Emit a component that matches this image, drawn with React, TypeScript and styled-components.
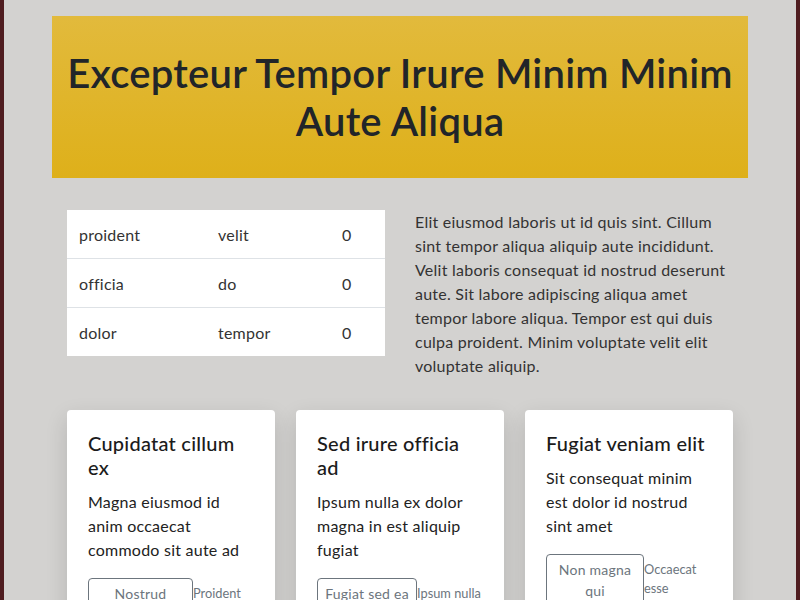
import React from 'react';
import styled, { createGlobalStyle } from 'styled-components';

const GlobalStyle = createGlobalStyle`
  html {
    background: #4f1d20;
  }
  body {
    margin: 0 auto;
    max-width: 792px;
    min-height: 100vh;
    background: #d3d2d0;
    font-family: Lato, 'Open Sans', sans-serif;
    letter-spacing: 0.015em;
    color: #212529;
  }
`;

//전체 페이지
const Page = styled.main`
  padding: 16px 48px 40px;
`;

//상단 배너
const Banner = styled.h1`
  margin: 0;
  padding: 33px 8px;
  background: linear-gradient(#e2ba3c, #deb01a);
  color: #212529;
  font-size: 40px;
  font-weight: 600;
  line-height: 1.2;
  text-align: center;
`;

const TwoCol = styled.section`
  display: grid;
  grid-template-columns: 1fr 1fr;
  gap: 30px;
  margin-top: 32px;
  padding: 0 15px;
  align-items: start;
`;

const Table = styled.table`
  width: 100%;
  background: #fff;
  border-collapse: collapse;
  font-size: 16px;
  color: #333;
`;

const Cell = styled.td<{ w?: number }>`
  width: ${(p) => (p.w ? `${p.w}px` : 'auto')};
  padding: 13px 12px 11px;
  line-height: 24px;
  border-top: 1px solid #dee2e6;
  tr:first-child & {
    border-top: none;
  }
`;

const Text = styled.p`
  margin: 0;
  font-size: 16px;
  line-height: 24px;
  color: #333;
`;

const Cards = styled.section`
  display: grid;
  grid-template-columns: repeat(3, 1fr);
  gap: 21px;
  margin-top: 32px;
  padding: 0 15px;
  align-items: start;
`;

const Card = styled.article`
  background: #fff;
  border-radius: 4px;
  box-shadow: 0 8px 22px rgba(0, 0, 0, 0.14);
  padding: 21px;
`;

const CardTitle = styled.h3`
  margin: 0 0 11px;
  font-size: 20px;
  font-weight: 500;
  line-height: 24px;
  color: #1b1b1b;
`;

const CardText = styled.p`
  margin: 0 0 16px;
  font-size: 16px;
  line-height: 24px;
  color: #222;
`;

const CardFoot = styled.div`
  display: flex;
  align-items: flex-start;
`;

const OutlineButton = styled.button<{ w: number }>`
  flex: 0 0 ${(p) => p.w}px;
  padding: 4px 3px;
  border: 1px solid #6c757d;
  border-radius: 4px;
  background: transparent;
  color: #6c757d;
  font-family: inherit;
  letter-spacing: inherit;
  font-size: 14px;
  line-height: 21px;
  text-align: center;
`;

const Muted = styled.small`
  flex: 1 1 0;
  min-width: 0;
  font-size: 12.8px;
  letter-spacing: 0;
  line-height: 19px;
  padding-top: 6px;
  color: #6c757d;
`;

const rows = [
  ['proident', 'velit', '0'],
  ['officia', 'do', '0'],
  ['dolor', 'tempor', '0'],
];

const cards = [
  {
    title: 'Cupidatat cillum ex',
    text: 'Magna eiusmod id anim occaecat commodo sit aute ad',
    button: 'Nostrud',
    width: 105,
    note: 'Proident',
  },
  {
    title: 'Sed irure officia ad',
    text: 'Ipsum nulla ex dolor magna in est aliquip fugiat',
    button: 'Fugiat sed ea',
    width: 100,
    note: 'Ipsum nulla',
  },
  {
    title: 'Fugiat veniam elit',
    text: 'Sit consequat minim est dolor id nostrud sint amet',
    button: 'Non magna qui',
    width: 98,
    note: 'Occaecat esse',
  },
];

const App = () => {
  return (
    <>
      <GlobalStyle />
      <Page>
        <Banner>Excepteur Tempor Irure Minim Minim Aute Aliqua</Banner>
        <TwoCol>
          <Table>
            <tbody>
              {rows.map((r) => (
                <tr key={r[0]}>
                  <Cell w={115}>{r[0]}</Cell>
                  <Cell w={100}>{r[1]}</Cell>
                  <Cell>{r[2]}</Cell>
                </tr>
              ))}
            </tbody>
          </Table>
          <Text>
            Elit eiusmod laboris ut id quis sint. Cillum sint tempor aliqua aliquip aute incididunt.
            Velit laboris consequat id nostrud deserunt aute. Sit labore adipiscing aliqua amet
            tempor labore aliqua. Tempor est qui duis culpa proident. Minim voluptate velit elit
            voluptate aliquip.
          </Text>
        </TwoCol>
        <Cards>
          {cards.map((c) => (
            <Card key={c.title}>
              <CardTitle>{c.title}</CardTitle>
              <CardText>{c.text}</CardText>
              <CardFoot>
                <OutlineButton w={c.width}>{c.button}</OutlineButton>
                <Muted>{c.note}</Muted>
              </CardFoot>
            </Card>
          ))}
        </Cards>
      </Page>
    </>
  );
};
export default App;
